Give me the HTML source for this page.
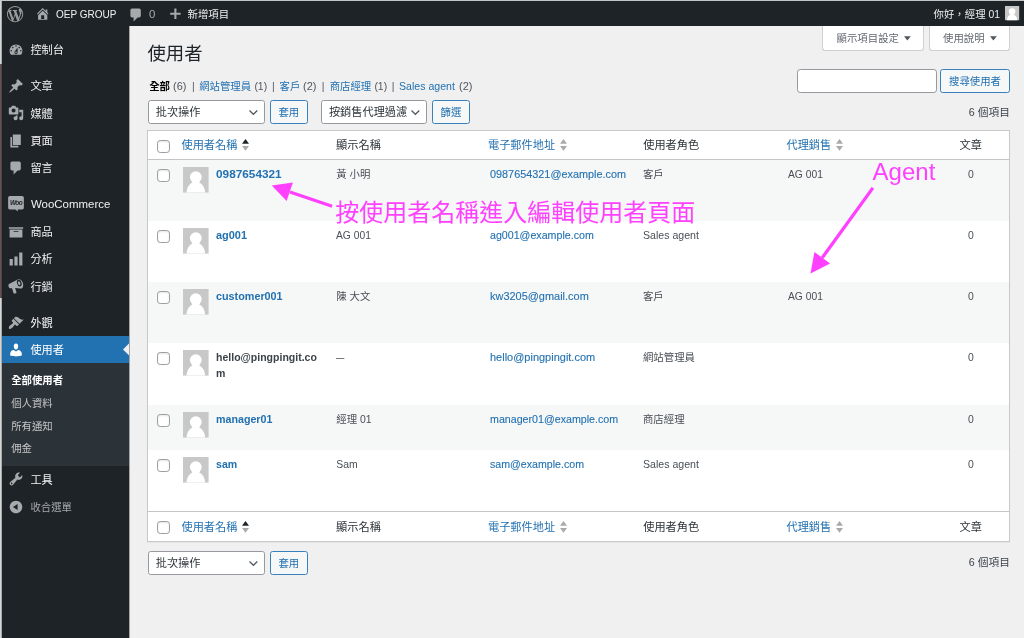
<!DOCTYPE html>
<html lang="zh-Hant">
<head>
<meta charset="utf-8">
<title>使用者 ‹ OEP GROUP — WordPress</title>
<style>
*{box-sizing:border-box;margin:0;padding:0}
html,body{width:1024px;height:638px;overflow:hidden;background:#f0f0f1}
body{position:relative;font-family:"Liberation Sans","Noto Sans CJK TC",sans-serif;font-size:10.4px;color:#3c434a;-webkit-font-smoothing:antialiased}
a{text-decoration:none;color:#2271b1}
.abs,.t,.ic{position:absolute}
.t{white-space:nowrap;height:16px;line-height:16px}
svg{display:block;overflow:visible}
#root{position:absolute;left:0;top:0;width:1024px;height:638px;overflow:hidden;will-change:transform}

/* window edges */
#edge-l{left:0;top:0;width:1px;height:638px;background:#d5d6d6}
#edge-l2{left:1px;top:0;width:1px;height:638px;background:#a9abad}
#edge-brown{left:0;top:64px;width:1px;height:234px;background:#645351}
#edge-brown2{left:1px;top:64px;width:1px;height:234px;background:#4c4342}
#edge-t{left:0;top:0;width:1024px;height:1px;background:#c3c4c6}
#edge-m{left:129px;top:26px;width:1px;height:612px;background:#a3a5a8}

/* admin bar */
#wpadminbar{left:1.6px;top:1px;width:1023px;height:25px;background:#1d2327;color:#f0f0f1}
#wpadminbar .t{top:6px;color:#f0f0f1;font-size:10.4px}
#wpadminbar .ic{fill:#a7aaad}

/* admin menu */
#adminmenu{left:1.6px;top:26px;width:127.8px;height:612px;background:#1d2327}
#adminmenu .t{left:28.8px;font-size:11.2px;color:#f0f0f1}
#adminmenu .ic{fill:#a7aaad;width:16px;height:16px;left:6.4px}
#adminmenu .cur{left:0;width:127.8px;background:#2271b1}
#adminmenu .sub{left:0;width:127.8px;background:#2c3338}
#adminmenu .s{left:9.6px;font-size:10.4px;color:#c3c4c7}
#adminmenu .s.on{color:#fff;font-weight:bold}

/* content */
h1{position:absolute;font-weight:400;font-size:18.4px;color:#1d2327;white-space:nowrap;height:24px;line-height:24px}
.tab{position:absolute;top:26px;height:25px;background:#fff;border:1px solid #cfd0d3;border-top:none;border-radius:0 0 3.2px 3.2px;color:#646970}
.tab .t{top:5px}
.tab svg{position:absolute;fill:#50575e}
.sel{position:absolute;height:23.6px;background:#fff;border:1px solid #96999e;border-radius:2.6px;color:#2c3338;font-size:11.2px}
.sel .t{top:3px;left:6.6px}
.sel svg{position:absolute;right:6.2px;top:8.6px}
.btn{position:absolute;height:23.6px;background:#f6f7f7;border:1px solid #3a80ba;border-radius:2.6px;color:#2271b1;text-align:center}
.btn .t{top:4px;left:0;right:0}
.inp{position:absolute;height:24px;background:#fff;border:1px solid #96999e;border-radius:3.2px}
.sss{font-size:10.4px}
b.sss{color:#000;font-weight:bold}
i.sss{font-style:normal;color:#50575e}
a.sss{color:#2271b1}

/* table */
#tbl{left:147.4px;top:130px;width:862.6px;height:412px;background:#fff;border:1px solid #c8c9cc;box-shadow:0 1px 1px rgba(0,0,0,.04)}
.row{position:absolute;left:0;width:860.6px}
.row.alt{background:#f6f7f7}
.row .t{top:7px;font-size:10.4px;color:#484f56}
.row .u{font-weight:bold;color:#2271b1;left:67.9px}
.row .n{left:187.9px}
.row .e{left:341.5px;color:#2271b1;-webkit-text-stroke:.1px #2271b1}
.row .r{left:494.6px}
.row .g{left:639.8px}
.row .p{left:802.4px;width:40px;text-align:center}
.hd .t,.ft .t{top:6px;font-size:11.2px;color:#2c3338}
.hd .l,.ft .l{color:#2271b1}
.hd{border-bottom:1px solid #c3c4c7}
.ft{border-top:1px solid #c3c4c7}
.ft .t{top:7px}
.hd .cb{top:9px}
.ft .cb{top:9px}
.hd .srt{top:8px}
.ft .srt{top:9px}
.cb{position:absolute;left:8.4px;width:13px;height:13px;border:1px solid #9b9ea3;border-radius:3.2px;background:#fff;box-shadow:inset 0 1px 2px rgba(0,0,0,.1)}
.av{position:absolute;left:34.2px;width:25.6px;height:25.6px}
.srt{position:absolute;width:7px;height:12px}
#annot{position:absolute;left:0;top:0;width:1024px;height:638px;pointer-events:none}
#annot text{font-family:"Liberation Sans","Noto Sans CJK TC",sans-serif;fill:#ff40ff}
</style>
</head>
<body>
<div id="root">
<div class="abs" id="wpadminbar">
<svg class="ic" style="left:5.3px;top:4.6px;opacity:.9" width="16.2" height="16.2" viewBox="0 0 20 20"><path d="M20 10c0-5.51-4.49-10-10-10C4.48 0 0 4.49 0 10c0 5.52 4.48 10 10 10 5.51 0 10-4.48 10-10zM7.78 15.37L4.37 6.22c.55-.02 1.17-.08 1.17-.08.5-.06.44-1.13-.06-1.11 0 0-1.45.11-2.37.11-.18 0-.37 0-.58-.01C4.12 2.69 6.87 1.11 10 1.11c2.33 0 4.45.87 6.05 2.34-.68-.11-1.65.39-1.65 1.58 0 .74.45 1.36.9 2.1.35.61.55 1.36.55 2.46 0 1.49-1.4 5-1.4 5l-3.03-8.37c.54-.02.82-.17.82-.17.5-.05.44-1.25-.06-1.22 0 0-1.44.12-2.38.12-.87 0-2.33-.12-2.33-.12-.5-.03-.56 1.2-.06 1.22l.92.08 1.26 3.41zM17.41 10c.24-.64.74-1.87.43-4.25.7 1.29 1.05 2.71 1.05 4.25 0 3.29-1.73 6.24-4.4 7.78.97-2.59 1.94-5.2 2.92-7.78zM6.1 18.09C3.12 16.65 1.11 13.53 1.11 10c0-1.3.23-2.48.72-3.59C3.25 10.3 4.67 14.2 6.1 18.09zm4.03-6.63l2.58 6.98c-.86.29-1.76.45-2.71.45-.79 0-1.57-.11-2.29-.33.81-2.38 1.62-4.74 2.42-7.1z"/></svg>
<svg class="ic" style="left:33.6px;top:5px" width="15.4" height="15.4" viewBox="0 0 20 20"><path d="M16 8.5l1.53 1.53-1.06 1.06L10 4.62l-6.47 6.47-1.06-1.06L10 2.5l4 4v-2h2v4zm-6-2.46l6 5.99V18H4v-5.97zM12 17v-5H8v5h4z"/></svg>
<span class="t" style="left:54.4px;transform:scaleX(.962);transform-origin:0 50%">OEP GROUP</span>
<svg class="ic" style="left:126.2px;top:6px" width="16" height="16" viewBox="0 0 20 20"><path d="M5 2h9c1.1 0 2 .9 2 2v7c0 1.1-.9 2-2 2h-2l-5 5v-5H5c-1.1 0-2-.9-2-2V4c0-1.1.9-2 2-2z"/></svg>
<span class="t" style="left:147.8px;color:#a7aaad;transform:scaleX(1.1);transform-origin:0 50%">0</span>
<svg class="ic" style="left:165.8px;top:6.4px" width="16" height="16" viewBox="0 0 20 20"><path d="M17 7.200v2.600h-5.200v5.200H9.200V9.800H4V7.200h5.200V2h2.600v5.200H17z"/></svg>
<span class="t" style="left:186px">新增項目</span>
<span class="t" style="left:932px">你好，經理 01</span>
<svg class="abs" style="left:1003.2px;top:5px" width="14.2" height="14.2" viewBox="0 0 32 32"><rect width="32" height="32" fill="#c8c8c8"/><circle cx="16" cy="12.600" r="7.400" fill="#fff"/><path d="M4.400 32c.200-4.200 1.400-7.400 3.400-9.600 2.200-2.400 5-3.600 8.200-3.600s6 1.200 8.200 3.600c2 2.200 3.200 5.400 3.400 9.600z" fill="#fff"/><path d="M11.500 17h9v4h-9z" fill="#fff"/></svg>
</div>
<div class="abs" id="adminmenu">
<div class="abs cur" style="top:310px;height:27px"></div>
<div class="abs sub" style="top:337px;height:103px"></div>
<svg class="abs" style="left:121.4px;top:317.48px" width="6.4" height="12.8" viewBox="0 0 8 16"><path d="M8 0L0 8l8 8z" fill="#f0f0f1"/></svg>
<svg class="ic" style="top:15.88px" viewBox="0 0 20 20"><path d="M3.76 16h12.48c1.1-1.37 1.76-3.11 1.76-5 0-4.42-3.58-8-8-8s-8 3.58-8 8c0 1.89.66 3.63 1.76 5zM10 4c.55 0 1 .45 1 1s-.45 1-1 1-1-.45-1-1 .45-1 1-1zM6 6c.55 0 1 .45 1 1s-.45 1-1 1-1-.45-1-1 .45-1 1-1zm8 0c.55 0 1 .45 1 1s-.45 1-1 1-1-.45-1-1 .45-1 1-1zm-5.370 5.550L12 7v6c0 1.100-.900 2-2 2s-2-.900-2-2c0-.570.240-1.080.630-1.450zM4 10c.55 0 1 .45 1 1s-.45 1-1 1-1-.45-1-1 .45-1 1-1zm12 0c.55 0 1 .45 1 1s-.45 1-1 1-1-.45-1-1 .45-1 1-1zm-5 3c0-.55-.45-1-1-1s-1 .45-1 1 .45 1 1 1 1-.45 1-1z"/></svg>
<span class="t" style="top:16px">控制台</span>
<svg class="ic" style="top:52.04px" viewBox="0 0 20 20"><path d="M10.44 3.02l1.82-1.82 6.36 6.35-1.83 1.82c-1.05-.68-2.48-.57-3.41.36l-.75.75c-.92.93-1.04 2.35-.35 3.41l-1.83 1.82-2.41-2.41-2.8 2.79c-.42.42-3.38 2.71-3.8 2.29s1.86-3.39 2.28-3.81l2.79-2.79L4.1 9.36l1.83-1.82c1.05.69 2.48.57 3.4-.36l.75-.75c.93-.92 1.05-2.35.36-3.41z"/></svg>
<span class="t" style="top:52px">文章</span>
<svg class="ic" style="top:79.40px" viewBox="0 0 20 20"><path d="M13 11V4c0-.55-.45-1-1-1h-1.67L9 1H5L3.67 3H2c-.55 0-1 .45-1 1v7c0 .55.45 1 1 1h10c.55 0 1-.45 1-1zM7 4.5c1.38 0 2.5 1.12 2.5 2.5S8.38 9.5 7 9.5 4.5 8.38 4.5 7 5.62 4.5 7 4.5zM14 6h5v10.5c0 1.38-1.12 2.5-2.5 2.5S14 17.88 14 16.5s1.12-2.5 2.5-2.5c.17 0 .34.02.5.05V9h-3V6zm-4 8.05V13h2v3.5c0 1.38-1.12 2.5-2.5 2.5S7 17.88 7 16.5 8.12 14 9.5 14c.17 0 .34.02.5.05z"/></svg>
<span class="t" style="top:80px">媒體</span>
<svg class="ic" style="top:106.76px" viewBox="0 0 20 20"><path d="M6 15V2h10v13H6zm-1 1h8v2H3V5h2v11z"/></svg>
<span class="t" style="top:107px">頁面</span>
<svg class="ic" style="top:134.12px" viewBox="0 0 20 20"><path d="M5 2h9c1.1 0 2 .9 2 2v7c0 1.1-.9 2-2 2h-2l-5 5v-5H5c-1.1 0-2-.9-2-2V4c0-1.1.9-2 2-2z"/></svg>
<span class="t" style="top:134px">留言</span>
<svg class="ic" style="top:170.28px" viewBox="0 0 20 20"><path d="M2.400.100h15.200c1.200 0 2.200 1 2.200 2.200v12.400c0 1.200-1 2.200-2.200 2.200h-5.600l.400 2.400-3.200-2.400H2.400c-1.200 0-2.200-1-2.200-2.200V2.300c0-1.200 1-2.200 2.200-2.200z"/><text x="10" y="11.300" text-anchor="middle" font-size="8.200" font-weight="bold" font-style="italic" fill="#1d2327" font-family="Liberation Sans,sans-serif" letter-spacing="-0.8">Woo</text></svg>
<span class="t" style="top:170px;left:29.6px;transform:scaleX(1.024);transform-origin:0 50%">WooCommerce</span>
<svg class="ic" style="top:197.64px" viewBox="0 0 20 20"><path d="M19 4v2H1V4h18zM2 7h16v10H2V7zm11 3V9H7v1h6z"/></svg>
<span class="t" style="top:198px">商品</span>
<svg class="ic" style="top:225.00px" viewBox="0 0 20 20"><path d="M18 18V2h-4v16h4zm-6 0V7H8v11h4zm-6 0v-8H2v8h4z"/></svg>
<span class="t" style="top:225px">分析</span>
<svg class="ic" style="top:252.36px" viewBox="0 0 20 20"><path transform="translate(10 10) scale(1.16) translate(-10 -10.300)" d="M12.400 3.100c1.600-.600 3.600.600 4.700 3.200 1.100 2.700.800 5.300-.600 6.300-.500.300-1.100.400-1.700.300L9 12.400l1.500 4.700c.100.400-.100.800-.500.900l-1.700.500c-.400.100-.800-.100-.900-.500L5.700 12.600l-1.300.200c-1 .100-1.900-.500-2.200-1.400l-.300-1.100c-.300-.900.200-1.900 1.100-2.300z"/><ellipse cx="14.100" cy="6.300" rx="2.800" ry="4.400" transform="rotate(-18 14.100 6.300)" fill="#1d2327"/><ellipse cx="13.950" cy="6.500" rx="1.450" ry="2.500" transform="rotate(-18 13.950 6.500)"/></svg>
<span class="t" style="top:253px">行銷</span>
<svg class="ic" style="top:288.52px" viewBox="0 0 20 20"><path d="M14.480 11.060L7.410 3.990l1.500-1.500c.5-.56 2.300-.47 3.510.32 1.210.8 1.430 1.280 2.910 2.100 1.180.64 2.450 1.260 4.450.85zm-.71.71L6.700 4.700 4.930 6.470c-.39.39-.39 1.020 0 1.410l1.060 1.060c.39.39.39 1.030 0 1.420-.6.6-1.430 1.110-2.210 1.690-.35.26-.7.53-1.010.84C1.430 14.230.4 16.080 1.400 17.070c.99 1 2.840-.03 4.180-1.360.31-.31.580-.66.850-1.020.57-.78 1.080-1.610 1.690-2.210.39-.39 1.020-.39 1.410 0l1.060 1.060c.39.39 1.020.39 1.410 0z"/></svg>
<span class="t" style="top:289px">外觀</span>
<svg class="ic" style="fill:#fff;top:315.88px" viewBox="0 0 20 20"><path d="M10 9.250c-2.270 0-2.730-3.440-2.730-3.440C7 4.020 7.820 2 9.970 2c2.160 0 2.980 2.020 2.710 3.810 0 0-.41 3.440-2.680 3.440zm0 2.570L12.720 10c2.390 0 4.520 2.330 4.520 4.530v2.490s-3.650 1.130-7.240 1.130c-3.650 0-7.240-1.130-7.240-1.130v-2.490c0-2.250 1.940-4.480 4.470-4.480z"/></svg>
<span class="t" style="top:316px;color:#fff">使用者</span>
<svg class="ic" style="top:445.48px" viewBox="0 0 20 20"><path d="M16.680 9.770c-1.340 1.340-3.300 1.670-4.950.99l-5.410 6.520c-.99.99-2.590.99-3.580 0s-.99-2.590 0-3.570l6.520-5.420c-.68-1.650-.35-3.610.99-4.950 1.280-1.280 3.120-1.620 4.720-1.060l-2.890 2.890 2.820 2.820 2.860-2.870c.53 1.580.18 3.390-1.080 4.650zM3.810 16.210c.4.39 1.040.39 1.430 0 .4-.4.400-1.040 0-1.430-.39-.4-1.030-.4-1.430 0-.39.39-.39 1.030 0 1.430z"/></svg>
<span class="t" style="top:446px">工具</span>
<svg class="ic" style="top:472.84px" viewBox="0 0 20 20"><path d="M10 2.160c4.330 0 7.840 3.510 7.840 7.840s-3.510 7.840-7.840 7.840S2.160 14.330 2.160 10 5.670 2.160 10 2.160zm2 11.720V6.120L6.180 9.970z"/></svg>
<span class="t" style="top:474px;color:#a7aaad;font-size:10.4px">收合選單</span>
<span class="t s on" style="top:347px">全部使用者</span>
<span class="t s" style="top:370px">個人資料</span>
<span class="t s" style="top:393px">所有通知</span>
<span class="t s" style="top:415px">佣金</span>
</div>
<h1 style="left:147.4px;top:42.3px">使用者</h1>
<div class="tab" style="left:822px;width:102px"><span class="t" style="left:13.600px">顯示項目設定</span><svg style="left:81px;top:9.800px" width="6.800" height="4.600" viewBox="0 0 8 5"><path d="M0 0h8L4 5z"/></svg></div>
<div class="tab" style="left:929px;width:81px"><span class="t" style="left:13px">使用說明</span><svg style="left:59.8px;top:9.800px" width="6.800" height="4.600" viewBox="0 0 8 5"><path d="M0 0h8L4 5z"/></svg></div>
<b class="t sss" style="left:149.2px;top:79px">全部</b>
<i class="t sss" style="transform:scaleX(1.06);transform-origin:0 50%;left:173.2px;top:79px">(6)</i>
<i class="t sss" style="left:192.1px;top:79px">|</i>
<a class="t sss" style="left:199.2px;top:79px">網站管理員</a>
<i class="t sss" style="transform:scaleX(1.0);transform-origin:0 50%;left:254.4px;top:79px">(1)</i>
<i class="t sss" style="left:272px;top:79px">|</i>
<a class="t sss" style="left:279.5px;top:79px">客戶</a>
<i class="t sss" style="transform:scaleX(1.06);transform-origin:0 50%;left:303.4px;top:79px">(2)</i>
<i class="t sss" style="left:321.7px;top:79px">|</i>
<a class="t sss" style="left:329.7px;top:79px">商店經理</a>
<i class="t sss" style="transform:scaleX(1.0);transform-origin:0 50%;left:374.4px;top:79px">(1)</i>
<i class="t sss" style="left:391.7px;top:79px">|</i>
<a class="t sss" style="transform:scaleX(1.019);transform-origin:0 50%;left:399.4px;top:79px">Sales agent</a>
<i class="t sss" style="transform:scaleX(1.06);transform-origin:0 50%;left:459px;top:79px">(2)</i>
<div class="inp" style="left:797px;top:69px;width:140px"></div>
<div class="btn" style="left:940px;top:69px;width:70px"><span class="t">搜尋使用者</span></div>
<div class="sel" style="left:148.1px;top:100px;width:117px"><span class="t">批次操作</span><svg width="8.800" height="5" viewBox="0 0 8.800 5"><path d="M0.500 0.500L4.400 4.300 8.300 0.500" fill="none" stroke="#50575e" stroke-width="1.200"/></svg></div>
<div class="btn" style="left:269.8px;top:100px;width:38px"><span class="t">套用</span></div>
<span class="t" style="right:14.6px;top:104.7px;color:#3c434a;transform:scaleX(1.03);transform-origin:100% 50%">6 個項目</span>
<div class="sel" style="left:148.1px;top:551.2px;width:117px"><span class="t">批次操作</span><svg width="8.800" height="5" viewBox="0 0 8.800 5"><path d="M0.500 0.500L4.400 4.300 8.300 0.500" fill="none" stroke="#50575e" stroke-width="1.200"/></svg></div>
<div class="btn" style="left:269.8px;top:551.2px;width:38px"><span class="t">套用</span></div>
<span class="t" style="right:14.6px;top:555px;color:#3c434a;transform:scaleX(1.03);transform-origin:100% 50%">6 個項目</span>
<div class="sel" style="left:321.3px;top:100px;width:106px"><span class="t">按銷售代理過濾</span><svg width="8.800" height="5" viewBox="0 0 8.800 5"><path d="M0.500 0.500L4.400 4.300 8.300 0.500" fill="none" stroke="#50575e" stroke-width="1.200"/></svg></div>
<div class="btn" style="left:431.9px;top:100px;width:38.1px"><span class="t">篩選</span></div>
<div class="abs" id="tbl">
<div class="row hd" style="top:0px;height:29px">
<div class="cb"></div>
<a class="t l" style="left:33.100px">使用者名稱</a><svg class="srt" style="left:93.6px" viewBox="0 0 7 12"><path d="M3.500 0L7 4.800H0z" fill="#1d2327"/><path d="M0 7h7L3.500 11.800z" fill="#a7aaad"/></svg>
<span class="t" style="left:187.700px">顯示名稱</span>
<a class="t l" style="left:339.600px">電子郵件地址</a><svg class="srt" style="left:411.4px" viewBox="0 0 7 12"><path d="M3.500 0L7 4.800H0z" fill="#a7aaad"/><path d="M0 7h7L3.500 11.800z" fill="#a7aaad"/></svg>
<span class="t" style="left:494.800px">使用者角色</span>
<a class="t l" style="left:638.100px">代理銷售</a><svg class="srt" style="left:687.7px" viewBox="0 0 7 12"><path d="M3.500 0L7 4.800H0z" fill="#a7aaad"/><path d="M0 7h7L3.500 11.800z" fill="#a7aaad"/></svg>
<span class="t" style="left:802.300px;width:40px;text-align:center">文章</span>
</div>
<div class="row alt" style="top:29px;height:61px">
<div class="cb" style="top:9px"></div><svg class="av" style="top:7px" viewBox="0 0 32 32"><rect width="32" height="32" fill="#c8c8c8"/><circle cx="16" cy="12.600" r="7.400" fill="#fff"/><path d="M4.400 32c.200-4.200 1.400-7.400 3.400-9.600 2.200-2.400 5-3.600 8.200-3.600s6 1.200 8.200 3.600c2 2.200 3.200 5.400 3.400 9.600z" fill="#fff"/><path d="M11.500 17h9v4h-9z" fill="#fff"/></svg>
<a class="t u" style="transform:scaleX(1.136);transform-origin:0 50%">0987654321</a>
<span class="t n">黃 小明</span><a class="t e" style="transform:scaleX(1.045);transform-origin:0 50%">0987654321@example.com</a><span class="t r">客戶</span>
<span class="t g" style="transform:scaleX(0.99);transform-origin:0 50%">AG 001</span>
<span class="t p">0</span></div>
<div class="row" style="top:90px;height:61px">
<div class="cb" style="top:9px"></div><svg class="av" style="top:7px" viewBox="0 0 32 32"><rect width="32" height="32" fill="#c8c8c8"/><circle cx="16" cy="12.600" r="7.400" fill="#fff"/><path d="M4.400 32c.200-4.200 1.400-7.400 3.400-9.600 2.200-2.400 5-3.600 8.200-3.600s6 1.200 8.200 3.600c2 2.200 3.200 5.400 3.400 9.600z" fill="#fff"/><path d="M11.500 17h9v4h-9z" fill="#fff"/></svg>
<a class="t u" style="transform:scaleX(1.053);transform-origin:0 50%">ag001</a>
<span class="t n" style="transform:scaleX(0.99);transform-origin:0 50%">AG 001</span><a class="t e" style="transform:scaleX(1.025);transform-origin:0 50%">ag001@example.com</a><span class="t r" style="transform:scaleX(1.019);transform-origin:0 50%">Sales agent</span>
<span class="t p">0</span></div>
<div class="row alt" style="top:151px;height:61px">
<div class="cb" style="top:9px"></div><svg class="av" style="top:7px" viewBox="0 0 32 32"><rect width="32" height="32" fill="#c8c8c8"/><circle cx="16" cy="12.600" r="7.400" fill="#fff"/><path d="M4.400 32c.200-4.200 1.400-7.400 3.400-9.600 2.200-2.400 5-3.600 8.200-3.600s6 1.200 8.200 3.600c2 2.200 3.200 5.400 3.400 9.600z" fill="#fff"/><path d="M11.500 17h9v4h-9z" fill="#fff"/></svg>
<a class="t u" style="transform:scaleX(1.039);transform-origin:0 50%">customer001</a>
<span class="t n">陳 大文</span><a class="t e" style="transform:scaleX(1.054);transform-origin:0 50%">kw3205@gmail.com</a><span class="t r">客戶</span>
<span class="t g" style="transform:scaleX(0.99);transform-origin:0 50%">AG 001</span>
<span class="t p">0</span></div>
<div class="row" style="top:212px;height:61px">
<div class="cb" style="top:9px"></div><svg class="av" style="top:7px" viewBox="0 0 32 32"><rect width="32" height="32" fill="#c8c8c8"/><circle cx="16" cy="12.600" r="7.400" fill="#fff"/><path d="M4.400 32c.200-4.200 1.400-7.400 3.400-9.600 2.200-2.400 5-3.600 8.200-3.600s6 1.200 8.200 3.600c2 2.200 3.200 5.400 3.400 9.600z" fill="#fff"/><path d="M11.500 17h9v4h-9z" fill="#fff"/></svg>
<span class="t u" style="color:#3c434a;white-space:normal;height:auto;line-height:15.500px;top:7px;transform:scaleX(1.013);transform-origin:0 50%">hello@pingpingit.co<br>m</span>
<span class="t n" style="transform:scaleX(0.8);transform-origin:0 50%">—</span><a class="t e" style="transform:scaleX(1.057);transform-origin:0 50%">hello@pingpingit.com</a><span class="t r">網站管理員</span>
<span class="t p">0</span></div>
<div class="row alt" style="top:274px;height:45px">
<div class="cb" style="top:9px"></div><svg class="av" style="top:7px" viewBox="0 0 32 32"><rect width="32" height="32" fill="#c8c8c8"/><circle cx="16" cy="12.600" r="7.400" fill="#fff"/><path d="M4.400 32c.200-4.200 1.400-7.400 3.400-9.600 2.200-2.400 5-3.600 8.200-3.600s6 1.200 8.200 3.600c2 2.200 3.200 5.400 3.400 9.600z" fill="#fff"/><path d="M11.500 17h9v4h-9z" fill="#fff"/></svg>
<a class="t u" style="transform:scaleX(1.028);transform-origin:0 50%">manager01</a>
<span class="t n">經理 01</span><a class="t e" style="transform:scaleX(1.026);transform-origin:0 50%">manager01@example.com</a><span class="t r">商店經理</span>
<span class="t p">0</span></div>
<div class="row" style="top:319px;height:61px">
<div class="cb" style="top:9px"></div><svg class="av" style="top:7px" viewBox="0 0 32 32"><rect width="32" height="32" fill="#c8c8c8"/><circle cx="16" cy="12.600" r="7.400" fill="#fff"/><path d="M4.400 32c.200-4.200 1.400-7.400 3.400-9.600 2.200-2.400 5-3.600 8.200-3.600s6 1.200 8.200 3.600c2 2.200 3.200 5.400 3.400 9.600z" fill="#fff"/><path d="M11.500 17h9v4h-9z" fill="#fff"/></svg>
<a class="t u" style="transform:scaleX(1.02);transform-origin:0 50%">sam</a>
<span class="t n">Sam</span><a class="t e" style="transform:scaleX(1.022);transform-origin:0 50%">sam@example.com</a><span class="t r" style="transform:scaleX(1.019);transform-origin:0 50%">Sales agent</span>
<span class="t p">0</span></div>
<div class="row ft" style="top:380px;height:30px">
<div class="cb"></div>
<a class="t l" style="left:33.100px">使用者名稱</a><svg class="srt" style="left:93.6px" viewBox="0 0 7 12"><path d="M3.500 0L7 4.800H0z" fill="#1d2327"/><path d="M0 7h7L3.500 11.800z" fill="#a7aaad"/></svg>
<span class="t" style="left:187.700px">顯示名稱</span>
<a class="t l" style="left:339.600px">電子郵件地址</a><svg class="srt" style="left:411.4px" viewBox="0 0 7 12"><path d="M3.500 0L7 4.800H0z" fill="#a7aaad"/><path d="M0 7h7L3.500 11.800z" fill="#a7aaad"/></svg>
<span class="t" style="left:494.800px">使用者角色</span>
<a class="t l" style="left:638.100px">代理銷售</a><svg class="srt" style="left:687.7px" viewBox="0 0 7 12"><path d="M3.500 0L7 4.800H0z" fill="#a7aaad"/><path d="M0 7h7L3.500 11.800z" fill="#a7aaad"/></svg>
<span class="t" style="left:802.300px;width:40px;text-align:center">文章</span>
</div>
</div>
<svg id="annot" viewBox="0 0 1024 638">
<g fill="#ff40ff" stroke="none">
<path d="M332.100 206.200L290 192" stroke="#ff40ff" stroke-width="3.300" fill="none"/>
<path d="M271.750 185.400L292.900 182.400 286.600 201.100z"/>
<path d="M872.900 187.900L822.200 257.800" stroke="#ff40ff" stroke-width="3.300" fill="none"/>
<path d="M810.500 273.500L814.400 252 830.100 263.600z"/>
</g>
<text x="335.200" y="221.200" font-size="24" font-weight="400">按使用者名稱進入編輯使用者頁面</text>
<text x="872.600" y="179.800" font-size="24">Agent</text>
</svg>
<div class="abs" id="edge-l"></div>
<div class="abs" id="edge-l2"></div>
<div class="abs" id="edge-brown"></div>
<div class="abs" id="edge-brown2"></div>
<div class="abs" id="edge-t"></div>
<div class="abs" id="edge-m"></div>
</div>
</body>
</html>
